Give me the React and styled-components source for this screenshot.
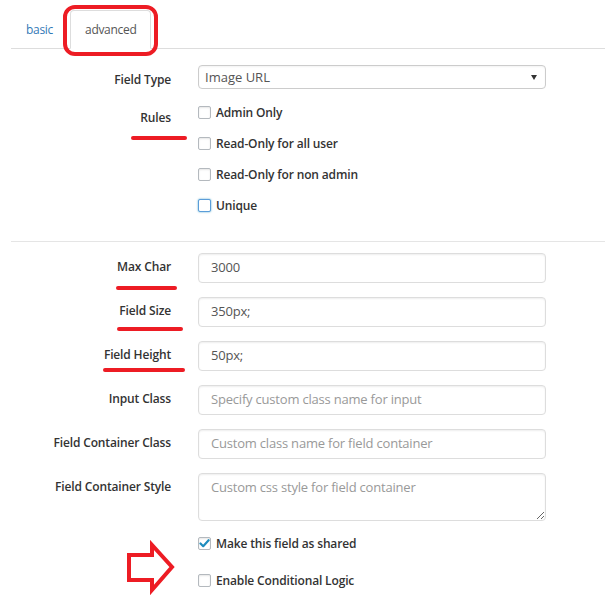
import React from "react";
import styled, { createGlobalStyle, css } from "styled-components";

const Global = createGlobalStyle`
  html, body { margin: 0; padding: 0; background: #fff; }
  body { font-family: "Open Sans", "Liberation Sans", sans-serif; font-size: 13px; line-height: 18px; color: #333; }
  * { box-sizing: border-box; }
`;

const Page = styled.div`
  position: relative;
  width: 605px;
  padding: 10px 0 20px 11px;
`;

const TabBar = styled.div`
  display: flex;
  gap: 2px;
  border-bottom: 1px solid #ddd;
`;

const Tab = styled.div`
  position: relative;
  padding: 10px 14px 9px;
  margin-bottom: -1px;
  border: 1px solid transparent;
  border-radius: 4px 4px 0 0;
  color: #337ab7;
  font-size: 12px;
  letter-spacing: -0.3px;
  line-height: 18px;
  ${(p) =>
    p.$active &&
    css`
      color: #555;
      border-color: #ddd #ddd #fff;
      background: #fff;
    `}
  ${(p) =>
    p.$circled &&
    css`
      &::after {
        content: "";
        position: absolute;
        top: -6px;
        bottom: -8px;
        left: -8px;
        right: -8px;
        border: 4px solid #ed1c24;
        border-radius: 12px;
      }
    `}
`;

const Form = styled.div`
  display: grid;
  grid-template-columns: 160px 348px;
  column-gap: 27px;
  row-gap: ${(p) => p.$gap}px;
  margin-top: ${(p) => p.$top}px;
`;

const labelText = css`
  font-weight: 600;
  font-size: 12px;
  letter-spacing: -0.15px;
  color: #333;
  line-height: 18px;
`;

const Label = styled.div`
  ${labelText}
  position: relative;
  text-align: right;
  padding-top: ${(p) => p.$pt ?? 5}px;
  ${(p) =>
    p.$mark &&
    css`
      &::after {
        content: "";
        position: absolute;
        top: ${p.$mark.top}px;
        right: ${-p.$mark.over}px;
        width: ${p.$mark.width}px;
        height: 4px;
        border-radius: 2px;
        background: #ed1c24;
      }
    `}
`;

const SelectWrap = styled.div`
  position: relative;
  &::after {
    content: "";
    position: absolute;
    right: 9px;
    top: 10px;
    border-left: 3.5px solid transparent;
    border-right: 3.5px solid transparent;
    border-top: 5px solid #333;
    pointer-events: none;
  }
`;

const Select = styled.select`
  appearance: none;
  display: block;
  width: 100%;
  height: 24px;
  padding: 2px 6px;
  border: 1px solid #ccc;
  border-radius: 4px;
  background: #fff;
  color: #555;
  font-family: inherit;
  font-size: 13px;
  line-height: 18px;
  box-shadow: inset 0 1px 2px rgba(0, 0, 0, 0.05);
`;

const fieldBase = css`
  display: block;
  width: 100%;
  border: 1px solid #ddd;
  border-radius: 4px;
  background: #fff;
  color: #555;
  font-family: inherit;
  font-size: 13px;
  letter-spacing: -0.2px;
  line-height: 18px;
  box-shadow: inset 0 1px 2px rgba(0, 0, 0, 0.07);
  outline: none;
  &::placeholder { color: #999; opacity: 1; }
`;

const Input = styled.input`
  ${fieldBase}
  height: 30px;
  padding: 3px 12px 5px;
`;

const TextArea = styled.textarea`
  ${fieldBase}
  height: 48px;
  padding: 4px 12px;
  resize: vertical;
  margin: 0;
`;

const CheckList = styled.div`
  display: flex;
  flex-direction: column;
  gap: ${(p) => p.$gap}px;
  grid-column: 2;
`;

const CheckRow = styled.label`
  ${labelText}
  display: flex;
  align-items: flex-start;
  gap: 5px;
  height: 18px;
`;

const CheckText = styled.span`
  padding-top: 1px;
`;

const Box = styled.span`
  flex: none;
  width: 13px;
  height: 13px;
  margin-top: 3px;
  border: 1px solid #b4b9be;
  border-radius: 2px;
  background: #fff;
  box-shadow: inset 0 1px 2px rgba(0, 0, 0, 0.1);
  display: flex;
  align-items: center;
  justify-content: center;
  ${(p) =>
    p.$focus &&
    css`
      border-color: #5b9dd9;
      box-shadow: 0 0 2px rgba(30, 140, 190, 0.8);
    `}
`;

const Divider = styled.div`
  height: 1px;
  background: #e5e5e5;
  margin-top: ${(p) => p.$top}px;
`;

const Arrow = styled.svg`
  position: absolute;
  left: 124px;
  top: 540px;
`;

const Check = ({ label, checked, focus }) => (
  <CheckRow>
    <Box $focus={focus}>
      {checked && (
        <svg width="11" height="11" viewBox="0 0 11 11">
          <path d="M1.5 5.5 L4.2 8.2 L9.6 2.2" fill="none" stroke="#1e8cbe" strokeWidth="2.2" strokeLinecap="round" strokeLinejoin="round" />
        </svg>
      )}
    </Box>
    <CheckText>{label}</CheckText>
  </CheckRow>
);

export default function App() {
  return (
    <>
      <Global />
      <Page>
        <TabBar>
          <Tab>basic</Tab>
          <Tab $active $circled>advanced</Tab>
        </TabBar>

        <Form $top={16} $gap={14}>
          <Label $pt={6}>Field Type</Label>
          <SelectWrap>
            <Select defaultValue="image">
              <option value="image">Image URL</option>
            </Select>
          </SelectWrap>

          <Label $pt={6} $mark={{ top: 33, over: 16, width: 56 }}>Rules</Label>
          <CheckList $gap={13}>
            <Check label="Admin Only" />
            <Check label="Read-Only for all user" />
            <Check label="Read-Only for non admin" />
            <Check label="Unique" focus />
          </CheckList>
        </Form>

        <Divider $top={27} />

        <Form $top={11} $gap={14}>
          <Label $mark={{ top: 33, over: 6, width: 61 }}>Max Char</Label>
          <Input defaultValue="3000" />

          <Label $mark={{ top: 30, over: 12, width: 66 }}>Field Size</Label>
          <Input defaultValue="350px;" />

          <Label $mark={{ top: 27, over: 14, width: 82 }}>Field Height</Label>
          <Input defaultValue="50px;" />

          <Label>Input Class</Label>
          <Input placeholder="Specify custom class name for input" />

          <Label>Field Container Class</Label>
          <Input placeholder="Custom class name for field container" />

          <Label>Field Container Style</Label>
          <TextArea placeholder="Custom css style for field container" />
        </Form>

        <Form $top={13} $gap={0}>
          <CheckList $gap={19}>
            <Check label="Make this field as shared" checked />
            <Check label="Enable Conditional Logic" />
          </CheckList>
        </Form>

        <Arrow width="56" height="56" viewBox="124 540 56 56">
          <polygon
            points="129,555 152,555 152,545 172,567 152,590 152,580 129,580"
            fill="none"
            stroke="#ed1c24"
            strokeWidth="4"
            strokeLinejoin="miter"
          />
        </Arrow>
      </Page>
    </>
  );
}
